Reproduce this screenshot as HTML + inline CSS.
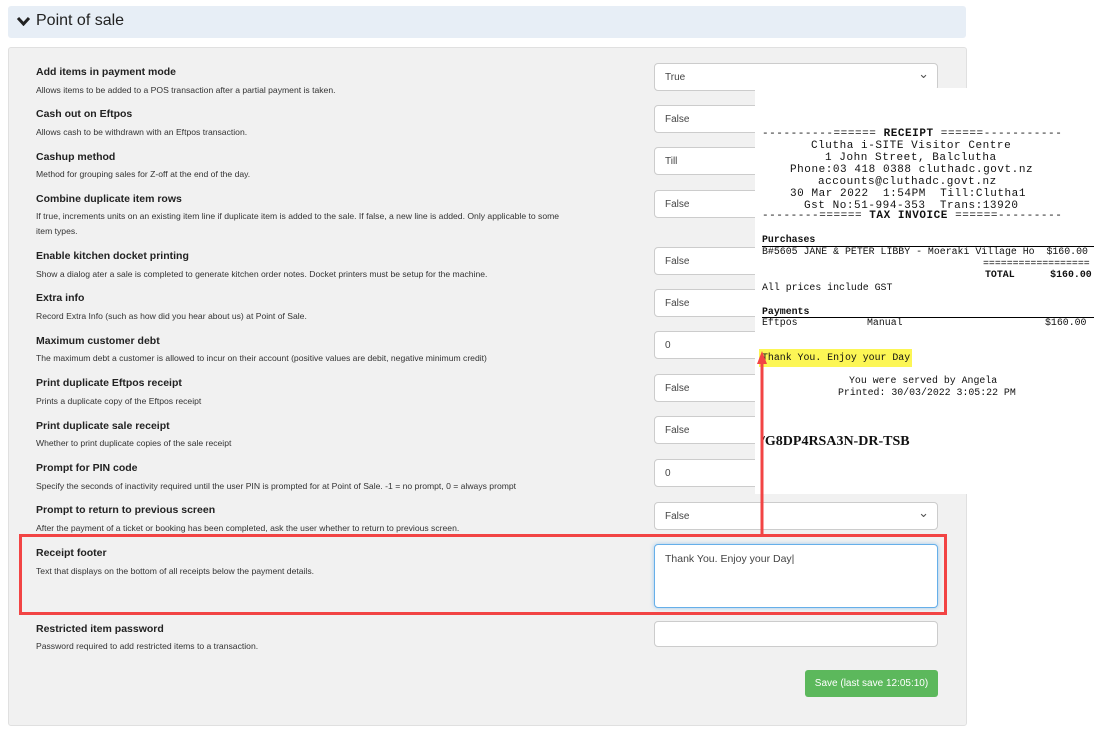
<!DOCTYPE html><html><head><style>
body{margin:0;width:1094px;height:732px;background:#fff;font-family:"Liberation Sans",sans-serif;position:relative;overflow:hidden;color:#222}
.hd{position:absolute;left:8px;top:6px;width:958px;height:32px;background:#e7eef6;border-radius:3px}
.hd span{position:absolute;left:28px;top:6px;font-size:16px;color:#222}
.panel{position:absolute;left:8px;top:47px;width:957px;height:677px;background:#f1f1f1;border:1px solid #e0e0e0;border-radius:3px}
.l{position:absolute;left:36px;font-size:10.5px;font-weight:bold;color:#222}
.d{position:absolute;left:36px;font-size:8.6px;color:#333;width:575px;line-height:15px}
.in{position:absolute;left:654px;width:284px;height:28px;background:#fff;border:1px solid #ccc;border-radius:4px;font-size:10px;color:#444;box-sizing:border-box;padding:8px 10px}
.sel:after{content:"⌄";position:absolute;right:8px;top:2px;font-size:13px;color:#555}
.rc{position:absolute;left:755px;top:88px;width:339px;height:406px;background:#fff;font-family:"Liberation Mono",monospace;font-size:10.3px;color:#111}
.rc div{position:absolute;white-space:pre}
.h{font-size:11px;letter-spacing:.55px}
.p{font-size:9.9px}
</style></head><body>
<div class="hd"><svg style="position:absolute;left:9px;top:10px" width="13" height="10" viewBox="0 0 13 10"><path d="M1 2 L6.5 8 L12 2" stroke="#222" stroke-width="3" fill="none"/></svg><span>Point of sale</span></div>
<div class="panel"></div>
<div class="l" style="top:66px">Add items in payment mode</div><div class="d" style="top:83px">Allows items to be added to a POS transaction after a partial payment is taken.</div>
<div class="in sel" style="top:63px">True</div>
<div class="l" style="top:108px">Cash out on Eftpos</div><div class="d" style="top:125px">Allows cash to be withdrawn with an Eftpos transaction.</div>
<div class="in" style="top:105px">False</div>
<div class="l" style="top:151px">Cashup method</div><div class="d" style="top:167px">Method for grouping sales for Z-off at the end of the day.</div>
<div class="in" style="top:147px">Till</div>
<div class="l" style="top:193px">Combine duplicate item rows</div><div class="d" style="top:209px">If true, increments units on an existing item line if duplicate item is added to the sale. If false, a new line is added. Only applicable to some<br>item types.</div>
<div class="in" style="top:190px">False</div>
<div class="l" style="top:250px">Enable kitchen docket printing</div><div class="d" style="top:267px">Show a dialog ater a sale is completed to generate kitchen order notes. Docket printers must be setup for the machine.</div>
<div class="in" style="top:247px">False</div>
<div class="l" style="top:292px">Extra info</div><div class="d" style="top:309px">Record Extra Info (such as how did you hear about us) at Point of Sale.</div>
<div class="in" style="top:289px">False</div>
<div class="l" style="top:335px">Maximum customer debt</div><div class="d" style="top:351px">The maximum debt a customer is allowed to incur on their account (positive values are debit, negative minimum credit)</div>
<div class="in" style="top:331px">0</div>
<div class="l" style="top:377px">Print duplicate Eftpos receipt</div><div class="d" style="top:394px">Prints a duplicate copy of the Eftpos receipt</div>
<div class="in" style="top:374px">False</div>
<div class="l" style="top:420px">Print duplicate sale receipt</div><div class="d" style="top:436px">Whether to print duplicate copies of the sale receipt</div>
<div class="in" style="top:416px">False</div>
<div class="l" style="top:462px">Prompt for PIN code</div><div class="d" style="top:479px">Specify the seconds of inactivity required until the user PIN is prompted for at Point of Sale. -1 = no prompt, 0 = always prompt</div>
<div class="in" style="top:459px">0</div>
<div class="l" style="top:504px">Prompt to return to previous screen</div><div class="d" style="top:521px">After the payment of a ticket or booking has been completed, ask the user whether to return to previous screen.</div>
<div class="in sel" style="top:502px">False</div>
<div class="l" style="top:547px">Receipt footer</div><div class="d" style="top:564px">Text that displays on the bottom of all receipts below the payment details.</div>
<div class="in" style="top:544px;height:64px;border-color:#66afe9;box-shadow:0 0 4px rgba(102,175,233,.6);font-size:10.5px">Thank You. Enjoy your Day|</div>
<div class="l" style="top:623px">Restricted item password</div><div class="d" style="top:639px">Password required to add restricted items to a transaction.</div>
<div class="in" style="top:621px;height:26px"></div>
<div style="position:absolute;left:805px;top:670px;width:133px;height:27px;background:#5cb85c;border-radius:3px;color:#fff;font-size:10px;text-align:center;line-height:27px">Save (last save 12:05:10)</div>
<div style="position:absolute;left:19px;top:534px;width:922px;height:75px;border:3px solid #f24444"></div>
<div class="rc">
<div class="h" style="top:40px;left:7px">----------====== <b>RECEIPT</b> ======-----------</div>
<div class="h" style="top:52px;left:56px">Clutha i-SITE Visitor Centre</div>
<div class="h" style="top:64px;left:70px">1 John Street, Balclutha</div>
<div class="h" style="top:76px;left:35px">Phone:03 418 0388 cluthadc.govt.nz</div>
<div class="h" style="top:88px;left:63px">accounts@cluthadc.govt.nz</div>
<div class="h" style="top:100px;left:35px">30 Mar 2022  1:54PM  Till:Clutha1</div>
<div class="h" style="top:112px;left:49px">Gst No:51-994-353  Trans:13920</div>
<div class="h" style="top:122px;left:7px">--------====== <b>TAX INVOICE</b> ======---------</div>
<div class="p" style="top:146px;left:7px;font-weight:bold">Purchases</div>
<div style="top:158px;left:7px;width:332px;border-top:1px solid #000"></div>
<div class="p" style="top:158px;left:7px">B#5605 JANE &amp; PETER LIBBY - Moeraki Village Ho  $160.00</div>
<div class="p" style="top:170px;left:228px">==================</div>
<div class="p" style="top:181px;left:230px;font-weight:bold">TOTAL      $160.00</div>
<div class="p" style="top:194px;left:7px">All prices include GST</div>
<div class="p" style="top:218px;left:7px;font-weight:bold">Payments</div>
<div style="top:229px;left:7px;width:332px;border-top:1px solid #000"></div>
<div class="p" style="top:229px;left:7px">Eftpos</div><div class="p" style="top:229px;left:112px">Manual</div><div class="p" style="top:229px;left:290px">$160.00</div>
<div style="top:261px;left:4px;width:153px;height:18px;background:#fcf655"></div>
<div class="p" style="top:264px;left:7px">Thank You. Enjoy your Day</div>
<div class="p" style="top:287px;left:94px">You were served by Angela</div>
<div class="p" style="top:299px;left:83px">Printed: 30/03/2022 3:05:22 PM</div>
<div style="top:346px;left:6px;font-family:'Liberation Serif',serif;font-weight:bold;font-size:14px">/G8DP4RSA3N-DR-TSB</div>
</div>
<svg style="position:absolute;left:0;top:0" width="1094" height="732"><path d="M762 534 V358" stroke="#f24444" stroke-width="3"/><path d="M757 364 L762 351 L767 364 Z" fill="#f24444"/></svg>
</body></html>
